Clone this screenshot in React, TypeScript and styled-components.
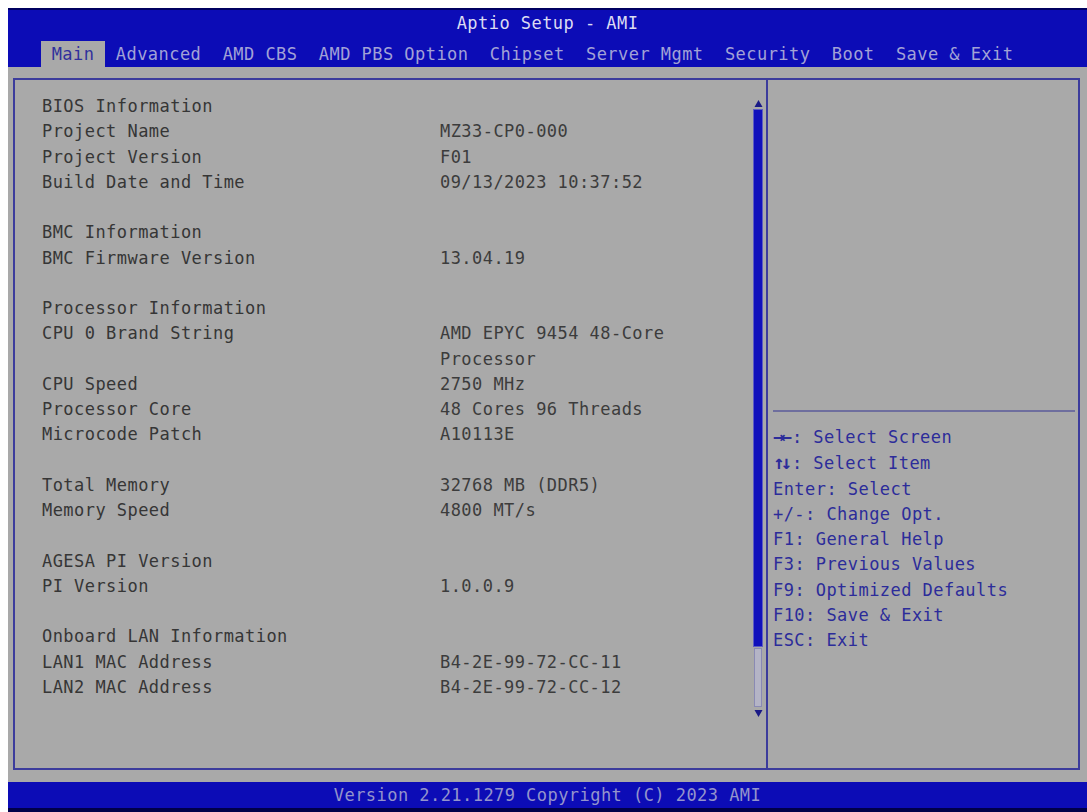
import { FC } from "react";
import styled, { createGlobalStyle } from "styled-components";

const GlobalStyle = createGlobalStyle`
  html, body {
    margin: 0;
    padding: 0;
    background: #ffffff;
    overflow: hidden;
  }
  body {
    font-family: "DejaVu Sans Mono", "Liberation Mono", monospace;
  }
`;

type Row = { label?: string; value?: string[] };

const rows: Row[] = [
  { label: "BIOS Information" },
  { label: "Project Name", value: ["MZ33-CP0-000"] },
  { label: "Project Version", value: ["F01"] },
  { label: "Build Date and Time", value: ["09/13/2023 10:37:52"] },
  {},
  { label: "BMC Information" },
  { label: "BMC Firmware Version", value: ["13.04.19"] },
  {},
  { label: "Processor Information" },
  { label: "CPU 0 Brand String", value: ["AMD EPYC 9454 48-Core", "Processor"] },
  { label: "CPU Speed", value: ["2750 MHz"] },
  { label: "Processor Core", value: ["48 Cores 96 Threads"] },
  { label: "Microcode Patch", value: ["A10113E"] },
  {},
  { label: "Total Memory", value: ["32768 MB (DDR5)"] },
  { label: "Memory Speed", value: ["4800 MT/s"] },
  {},
  { label: "AGESA PI Version" },
  { label: "PI Version", value: ["1.0.0.9"] },
  {},
  { label: "Onboard LAN Information" },
  { label: "LAN1 MAC Address", value: ["B4-2E-99-72-CC-11"] },
  { label: "LAN2 MAC Address", value: ["B4-2E-99-72-CC-12"] },
];

const tabs = [
  "Main",
  "Advanced",
  "AMD CBS",
  "AMD PBS Option",
  "Chipset",
  "Server Mgmt",
  "Security",
  "Boot",
  "Save & Exit",
];

const help: { key: string; text: string; glyph?: boolean }[] = [
  { key: "→←", text: ": Select Screen", glyph: true },
  { key: "↑↓", text: ": Select Item", glyph: true },
  { key: "Enter", text: ": Select" },
  { key: "+/-", text: ": Change Opt." },
  { key: "F1", text: ": General Help" },
  { key: "F3", text: ": Previous Values" },
  { key: "F9", text: ": Optimized Defaults" },
  { key: "F10", text: ": Save & Exit" },
  { key: "ESC", text: ": Exit" },
];

const Screen = styled.div`
  margin: 8px 0 0 8px;
  height: 804px;
  display: flex;
  flex-direction: column;
  background: #a9a9a9;
  font-size: 17px;
  letter-spacing: 0.45px;
`;

const Header = styled.header`
  background: #0c0cb6;
  border-top: 2px solid #000060;
  height: 59px;
  box-sizing: border-box;
  display: flex;
  flex-direction: column;
`;

const Title = styled.div`
  text-align: center;
  line-height: 26px;
  color: #dcdcf2;
`;

const TabBar = styled.nav`
  display: flex;
  margin-top: 5px;
  padding-left: 33px;
`;

const Tab = styled.span<{ $active?: boolean }>`
  padding: 0 10.7px;
  line-height: 26px;
  white-space: pre;
  color: ${(p) => (p.$active ? "#30309c" : "#a2a2d6")};
  background: ${(p) => (p.$active ? "#a9a9a9" : "transparent")};
`;

const Body = styled.main`
  flex: 1;
  padding: 11px 7px 12px 5px;
  display: flex;
`;

const Frame = styled.section`
  flex: 1;
  border: 2px solid #3c3c9c;
  display: grid;
  grid-template-columns: 751px 1fr;
`;

const InfoPane = styled.div`
  display: flex;
`;

const InfoList = styled.div`
  flex: 1;
  padding: 14px 0 0 27px;
`;

const InfoRow = styled.div`
  display: grid;
  grid-template-columns: 398px 1fr;
  line-height: 25.25px;
  min-height: 25.25px;
  color: #363636;
  white-space: pre;
`;

const Value = styled.div`
  color: #3c3c3c;
`;

const ScrollBar = styled.div`
  align-self: flex-start;
  margin: 18px 3px 0 0;
  width: 10px;
  display: flex;
  flex-direction: column;
  align-items: center;
`;

const Arrow = styled.svg`
  width: 9px;
  height: 12px;
  display: block;
  fill: #1a1a86;
`;

const Thumb = styled.div<{ $h: number }>`
  width: 8px;
  height: ${(p) => p.$h}px;
  background: #1010bc;
  box-shadow: 0 0 0 1px #5c5cc4;
`;

const Track = styled.div<{ $h: number }>`
  width: 6px;
  height: ${(p) => p.$h}px;
  background: #b4b4c6;
  border: 1px solid #8a8ab4;
  margin-top: 2px;
`;

const HelpPane = styled.aside`
  border-left: 2px solid #3c3c9c;
  display: flex;
  flex-direction: column;
`;

const Description = styled.div`
  height: 330px;
`;

const HelpDivider = styled.hr`
  margin: 0 3px 0 5px;
  border: none;
  border-top: 2px solid #6e6e9e;
`;

const HelpList = styled.ul`
  list-style: none;
  margin: 0;
  padding: 12px 0 0 5px;
`;

const HelpItem = styled.li`
  line-height: 25.25px;
  color: #2c2c9a;
  white-space: pre;
`;

const Glyph = styled.span`
  font-weight: bold;
  font-size: 19px;
  letter-spacing: -4px;
  margin-right: 4px;
`;

const Footer = styled.footer`
  height: 30px;
  box-sizing: border-box;
  background: #0c0cb6;
  border-bottom: 4px solid #00004a;
  text-align: center;
  line-height: 27px;
  color: #9494cc;
`;

const InfoLine: FC<{ row: Row }> = ({ row }) => (
  <InfoRow>
    <span>{row.label ?? ""}</span>
    <Value>
      {(row.value ?? []).map((v, i) => (
        <div key={i}>{v}</div>
      ))}
    </Value>
  </InfoRow>
);

export default function App() {
  return (
    <>
      <GlobalStyle />
      <Screen>
        <Header>
          <Title>Aptio Setup - AMI</Title>
          <TabBar>
            {tabs.map((t, i) => (
              <Tab key={t} $active={i === 0}>
                {t}
              </Tab>
            ))}
          </TabBar>
        </Header>
        <Body>
          <Frame>
            <InfoPane>
              <InfoList>
                {rows.map((r, i) => (
                  <InfoLine row={r} key={i} />
                ))}
              </InfoList>
              <ScrollBar>
                <Arrow viewBox="0 0 9 12">
                  <polygon points="4.5,2 8.5,9 0.5,9" />
                </Arrow>
                <Thumb $h={536} />
                <Track $h={57} />
                <Arrow viewBox="0 0 9 12">
                  <polygon points="0.5,3 8.5,3 4.5,10" />
                </Arrow>
              </ScrollBar>
            </InfoPane>
            <HelpPane>
              <Description />
              <HelpDivider />
              <HelpList>
                {help.map((h) => (
                  <HelpItem key={h.key}>
                    {h.glyph ? <Glyph>{h.key}</Glyph> : h.key}
                    {h.text}
                  </HelpItem>
                ))}
              </HelpList>
            </HelpPane>
          </Frame>
        </Body>
        <Footer>Version 2.21.1279 Copyright (C) 2023 AMI</Footer>
      </Screen>
    </>
  );
}
